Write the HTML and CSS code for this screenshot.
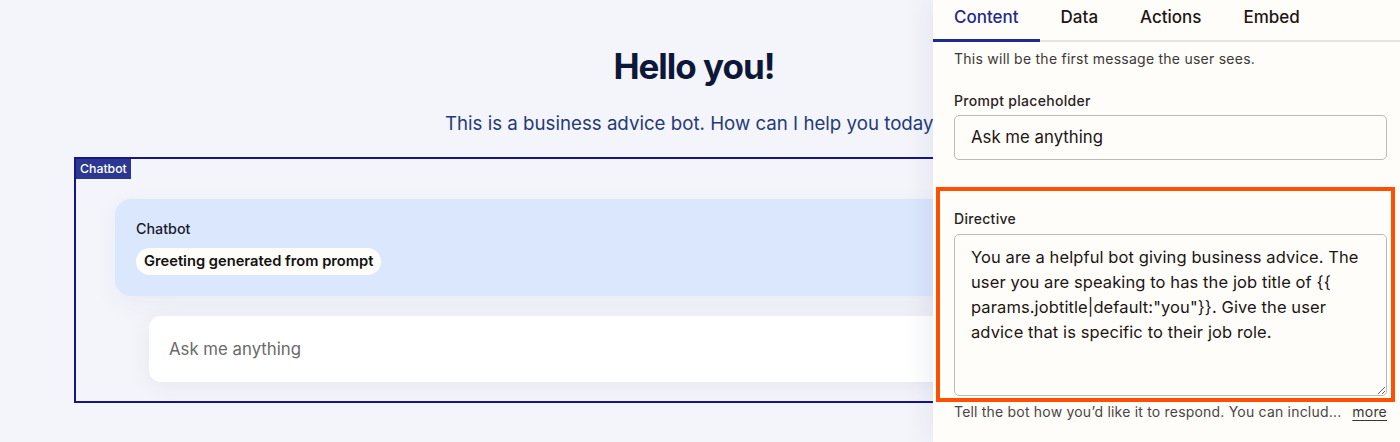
FILE: index.html
```html
<!DOCTYPE html>
<html lang="en">
<head>
<meta charset="utf-8">
<title>Chatbot editor</title>
<link rel="stylesheet" href="styles.css">
</head>
<body>
<div class="app">
  <main class="canvas">
    <h1 class="title">Hello you!</h1>
    <p class="subtitle">This is a business advice bot. How can I help you today?</p>
    <section class="frame">
      <span class="frame-tag">Chatbot</span>
      <div class="bubble">
        <div class="bubble-name">Chatbot</div>
        <span class="pill">Greeting generated from prompt</span>
      </div>
      <div class="ask">Ask me anything</div>
    </section>
  </main>

  <aside class="panel">
    <nav class="tabs">
      <span class="tab active">Content</span>
      <span class="tab">Data</span>
      <span class="tab">Actions</span>
      <span class="tab">Embed</span>
    </nav>
    <div class="panel-body">
      <p class="hint">This will be the first message the user sees.</p>
      <label class="field-label">Prompt placeholder</label>
      <div class="input">Ask me anything</div>
      <div class="highlight">
        <label class="field-label">Directive</label>
        <textarea class="textarea" readonly>You are a helpful bot giving business advice. The user you are speaking to has the job title of {{ params.jobtitle|default:"you"}}. Give the user advice that is specific to their job role.</textarea>
      </div>
      <div class="footer">
        <span class="footer-text">Tell the bot how you’d like it to respond. You can includ...</span>
        <span class="more">more</span>
      </div>
    </div>
  </aside>
</div>
</body>
</html>
```

FILE: styles.css
```css
* { box-sizing: border-box; }

html, body {
  margin: 0;
  padding: 0;
}

body {
  font-family: Inter, "Noto Sans", sans-serif;
  background: #f4f5fb;
  color: #201515;
}

.app {
  position: relative;
  width: 1400px;
  height: 442px;
  overflow: hidden;
}

/* ---------- canvas ---------- */
.canvas {
  width: 1388px;
  display: flex;
  flex-direction: column;
  align-items: center;
  padding-top: 45px;
}

.title {
  margin: 0;
  font-size: 35px;
  line-height: 42px;
  font-weight: 700;
  letter-spacing: -1px;
  color: #0d1838;
}

.subtitle {
  margin: 25px 0 0;
  font-size: 18.7px;
  line-height: 24px;
  color: #253a78;
}

.frame {
  position: relative;
  align-self: flex-start;
  margin: 21px 0 0 74px;
  width: 1240px;
  height: 246px;
  border: 2px solid #16168a;
  padding: 40px 39px 0;
}

.frame-tag {
  position: absolute;
  top: 0;
  left: 0;
  height: 20px;
  padding: 0 4px;
  background: #2c3791;
  color: #fff;
  font-size: 12.3px;
  font-weight: 500;
  line-height: 20px;
}

.bubble {
  height: 97px;
  border-radius: 16px;
  background: #dbe7fd;
  padding: 21px 21px 0;
  box-shadow: 0 8px 24px rgba(40, 50, 90, 0.05);
}

.bubble-name {
  font-size: 14.3px;
  line-height: 18px;
  font-weight: 500;
  color: #161a2c;
}

.pill {
  display: inline-block;
  margin-top: 10px;
  height: 27px;
  padding: 0 8px;
  border-radius: 14px;
  background: #fffdf9;
  font-size: 14.7px;
  line-height: 27px;
  font-weight: 600;
  color: #111;
}

.ask {
  margin: 20px 0 0 34px;
  height: 66px;
  border-radius: 12px;
  background: #fff;
  padding: 0 20px;
  font-size: 16.8px;
  line-height: 66px;
  color: #6a6a6a;
  box-shadow: 0 4px 24px rgba(40, 50, 90, 0.07);
}

/* ---------- panel ---------- */
.panel {
  position: absolute;
  top: 0;
  right: 0;
  width: 467px;
  height: 442px;
  background: #fffdf9;
  box-shadow: -6px 0 24px rgba(30, 40, 80, 0.07);
}

.tabs {
  display: flex;
  height: 42px;
  border-bottom: 2px solid #e7e5e1;
}

.tab {
  padding: 0 21px;
  height: 42px;
  font-size: 17px;
  line-height: 35px;
  font-weight: 500;
  color: #201515;
}

.tab.active {
  color: #1f2a8d;
  border-bottom: 3px solid #1f2a8d;
}

.panel-body {
  padding: 7px 13px 0 21px;
}

.hint {
  margin: 0;
  font-size: 14px;
  line-height: 20px;
  letter-spacing: 0.25px;
  color: #3b3838;
}

.field-label {
  display: block;
  font-size: 14px;
  line-height: 20px;
  letter-spacing: 0.3px;
  font-weight: 500;
  color: #2a2424;
}

.hint + .field-label {
  margin-top: 22px;
}

.input {
  margin-top: 4px;
  height: 45px;
  border: 1px solid #bdbab5;
  border-radius: 5px;
  padding: 0 16px;
  font-size: 16.8px;
  line-height: 43px;
  color: #201515;
}

.highlight {
  margin: 27px -8px 0 -18px;
  border: 4px solid #ff4f00;
  padding: 18px 4px 2px 14px;
}

.textarea {
  display: block;
  width: 100%;
  height: 162px;
  margin-top: 5px;
  border: 1px solid #bdbab5;
  border-radius: 5px;
  padding: 10px 12px 0 16px;
  background: #fffdf9;
  font-family: Inter, "Noto Sans", sans-serif;
  font-size: 16.5px;
  letter-spacing: 0.1px;
  line-height: 25px;
  color: #201515;
  resize: vertical;
  overflow: hidden;
  outline: none;
}

.footer {
  display: flex;
  justify-content: space-between;
  align-items: baseline;
  font-size: 14px;
  line-height: 20px;
}

.footer-text {
  color: #4a4545;
  letter-spacing: 0.2px;
}

.more {
  color: #3b3636;
  letter-spacing: 0.2px;
  text-decoration: underline;
  text-underline-offset: 3px;
}
```
